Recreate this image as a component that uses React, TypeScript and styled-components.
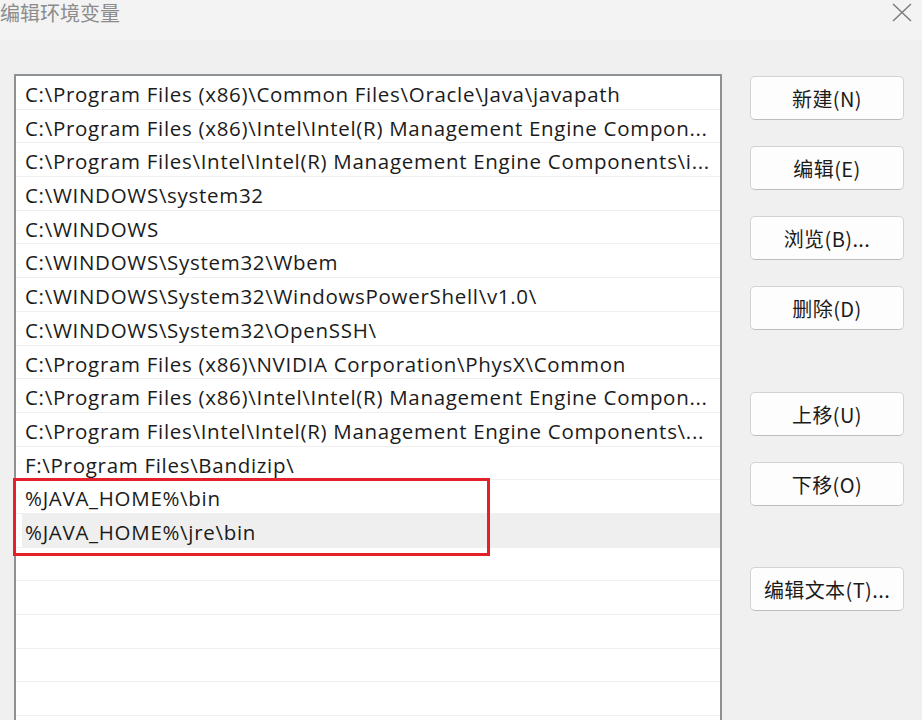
import styled, { createGlobalStyle } from "styled-components";

const GlobalStyle = createGlobalStyle`
  html, body {
    margin: 0;
    padding: 0;
    background: #f0f0f0;
    overflow: hidden;
  }
`;

const paths = [
  "C:\\Program Files (x86)\\Common Files\\Oracle\\Java\\javapath",
  "C:\\Program Files (x86)\\Intel\\Intel(R) Management Engine Compon...",
  "C:\\Program Files\\Intel\\Intel(R) Management Engine Components\\i...",
  "C:\\WINDOWS\\system32",
  "C:\\WINDOWS",
  "C:\\WINDOWS\\System32\\Wbem",
  "C:\\WINDOWS\\System32\\WindowsPowerShell\\v1.0\\",
  "C:\\WINDOWS\\System32\\OpenSSH\\",
  "C:\\Program Files (x86)\\NVIDIA Corporation\\PhysX\\Common",
  "C:\\Program Files (x86)\\Intel\\Intel(R) Management Engine Compon...",
  "C:\\Program Files\\Intel\\Intel(R) Management Engine Components\\...",
  "F:\\Program Files\\Bandizip\\",
  "%JAVA_HOME%\\bin",
  "%JAVA_HOME%\\jre\\bin",
  "",
  "",
  "",
  "",
  "",
];

const buttons = [
  { label: "新建(N)", top: 0 },
  { label: "编辑(E)", top: 26 },
  { label: "浏览(B)...", top: 26 },
  { label: "删除(D)", top: 26 },
  { label: "上移(U)", top: 62 },
  { label: "下移(O)", top: 26 },
  { label: "编辑文本(T)...", top: 61 },
];

const App = () => {
  return (
    <Window>
      <GlobalStyle />
      <TitleBar>
        <Title>编辑环境变量</Title>
        <CloseIcon width="20" height="20" viewBox="0 0 20 20">
          <path d="M1 1 L19 18 M19 1 L1 18" stroke="#7a7a7a" strokeWidth="1.4" fill="none" />
        </CloseIcon>
      </TitleBar>
      <Body>
        <ListBox>
          {paths.map((p, i) => (
            <Row key={i} selected={i === 13}>
              {p}
            </Row>
          ))}
          <Highlight />
        </ListBox>
        <ButtonColumn>
          {buttons.map((b) => (
            <Button key={b.label} gap={b.top}>
              {b.label}
            </Button>
          ))}
        </ButtonColumn>
      </Body>
    </Window>
  );
};

export default App;

const Window = styled.div`
  width: 922px;
  height: 720px;
  display: flex;
  flex-direction: column;
  background: #f0f0f0;
  font-family: "Open Sans", "Noto Sans CJK SC", sans-serif;
  overflow: hidden;
`;
const TitleBar = styled.div`
  height: 40px;
  flex-shrink: 0;
  display: flex;
  align-items: flex-start;
  justify-content: space-between;
  background: #f3f3f3;
  padding-right: 10px;
`;
const Title = styled.div`
  font-family: "Noto Sans CJK SC", sans-serif;
  font-size: 20px;
  line-height: 26px;
  color: #8c8c8c;
`;
const CloseIcon = styled.svg`
  margin-top: 3px;
`;
const Body = styled.div`
  flex: 1;
  display: flex;
  align-items: flex-start;
  padding: 34px 0 0 14px;
  gap: 28px;
`;
const ListBox = styled.div`
  position: relative;
  width: 704px;
  height: 700px;
  border: 2px solid #8e9297;
  border-bottom: none;
  background: #ffffff;
`;
const Row = styled.div<{ selected?: boolean }>`
  box-sizing: border-box;
  height: 33.7px;
  border-bottom: 1px solid #f0f0f0;
  padding: 2px 0 0 9px;
  font-size: 20.5px;
  letter-spacing: 0.7px;
  line-height: 32px;
  color: #1b1b1b;
  white-space: nowrap;
  overflow: hidden;
  background: ${(p) =>
    p.selected ? "linear-gradient(to right, #ffffff 6px, #efefef 6px)" : "#ffffff"};
`;
const Highlight = styled.div`
  position: absolute;
  left: -3px;
  top: 402px;
  width: 471px;
  height: 72px;
  border: 3px solid #e4212b;
`;
const ButtonColumn = styled.div`
  display: flex;
  flex-direction: column;
  padding-top: 2px;
`;
const Button = styled.div<{ gap: number }>`
  margin-top: ${(p) => p.gap}px;
  width: 152px;
  height: 42px;
  border: 1px solid #d3d3d3;
  border-bottom-color: #bdbdbd;
  border-radius: 5px;
  background: #fdfdfd;
  display: flex;
  align-items: center;
  justify-content: center;
  font-family: "Noto Sans CJK SC", sans-serif;
  font-size: 20px;
  letter-spacing: 0.4px;
  color: #1b1b1b;
`;
